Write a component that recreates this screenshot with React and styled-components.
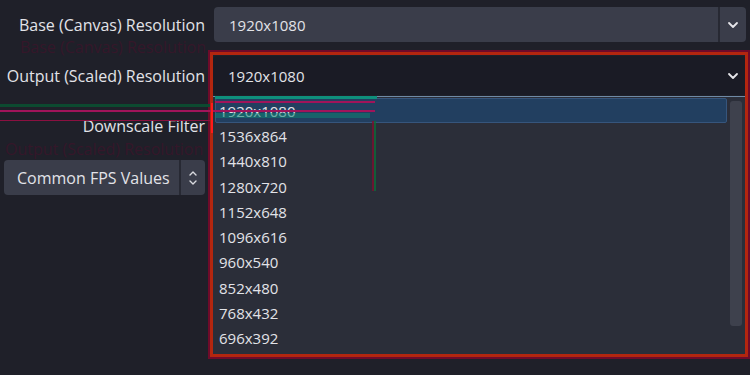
import React from "react";
import styled, { createGlobalStyle } from "styled-components";

const GlobalStyle = createGlobalStyle`
  html, body {
    margin: 0;
    padding: 0;
    background: #1f2029;
  }
  body {
    font-family: "Open Sans", "Noto Sans", sans-serif;
    font-size: 15px;
    color: #e2e3e8;
  }
`;

const Page = styled.div`
  position: relative;
  width: 750px;
  height: 375px;
  overflow: hidden;
  background: #1f2029;
`;

const Form = styled.div`
  display: flex;
  flex-direction: column;
  padding: 7px 4px 0 0;
`;

const Row = styled.div`
  display: flex;
  align-items: center;
  height: ${p => p.h || 35}px;
  margin-top: ${p => p.mt || 0}px;
`;

const Label = styled.div`
  width: 214px;
  flex: none;
  text-align: right;
  padding-right: 9px;
  box-sizing: border-box;
  white-space: nowrap;
  font-size: 16px;
`;

const Combo = styled.div`
  flex: 1;
  height: 100%;
  display: flex;
  align-items: stretch;
  border-radius: 4px;
  background: ${p => (p.open ? "#1a1b25" : "#3a3d4a")};
  margin-left: ${p => (p.open ? -1 : 0)}px;
`;

const ComboText = styled.div`
  flex: 1;
  display: flex;
  align-items: center;
  padding-left: 15px;
`;

const ComboArrow = styled.div`
  width: 26px;
  display: flex;
  align-items: center;
  justify-content: center;
  border-left: ${p => (p.open ? "none" : "2px solid #272933")};
`;

const FpsButton = styled.div`
  margin-left: 4px;
  width: 201px;
  height: 100%;
  display: flex;
  border-radius: 4px;
  background: #3a3d4a;
  font-size: 16px;
`;

const FpsText = styled.div`
  flex: 1;
  display: flex;
  align-items: center;
  padding-left: 13px;
`;

const FpsSpin = styled.div`
  width: 24px;
  display: flex;
  align-items: center;
  justify-content: center;
  border-left: 2px solid #272933;
`;

const List = styled.div`
  position: absolute;
  left: 213px;
  top: 96px;
  width: 532px;
  height: 259px;
  background: #2b2e39;
  border-top: 1px solid #6f8aa6;
  box-sizing: border-box;
  padding: 1px 18px 0 2px;
`;

const Item = styled.div`
  height: 25.3px;
  display: flex;
  align-items: center;
  padding-left: 3px;
  box-sizing: border-box;
  border-radius: 2px;
  background: ${p => (p.selected ? "#223f60" : "transparent")};
  border: 1px solid ${p => (p.selected ? "#36557c" : "transparent")};
`;

const Scrollbar = styled.div`
  position: absolute;
  right: 3px;
  top: 4px;
  width: 12px;
  height: 225px;
  border-radius: 3px;
  background: #3e414d;
`;

const Highlight = styled.div`
  position: absolute;
  left: 210px;
  top: 52px;
  width: 538px;
  height: 305px;
  box-sizing: border-box;
  border: 3px solid #b3260f;
  box-shadow: 0 0 0 2px #6e0b2a;
  pointer-events: none;
`;

// faint echo of the labels left behind by the capture
const Ghost = styled.div`
  position: absolute;
  pointer-events: none;
  left: ${p => p.x}px;
  top: ${p => p.y}px;
  font-size: 16px;
  color: #35172a;
  white-space: nowrap;
`;

const Glitch = styled.div`
  position: absolute;
  pointer-events: none;
  left: ${p => p.x}px;
  top: ${p => p.y}px;
  width: ${p => p.w}px;
  height: ${p => p.h}px;
  background: ${p => p.c};
  opacity: ${p => p.o || 1};
`;

const Chevron = () => (
  <svg width="12" height="8" viewBox="0 0 12 8">
    <path d="M2 2l4 4 4-4" fill="none" stroke="#e6e6ea" strokeWidth="1.8" strokeLinecap="round" strokeLinejoin="round" />
  </svg>
);

const UpDown = () => (
  <svg width="10" height="18" viewBox="0 0 10 18">
    <path d="M2 6l3-3 3 3M2 12l3 3 3-3" fill="none" stroke="#d8d9de" strokeWidth="1.4" strokeLinecap="round" strokeLinejoin="round" />
  </svg>
);

const resolutions = [
  "1920x1080",
  "1536x864",
  "1440x810",
  "1280x720",
  "1152x648",
  "1096x616",
  "960x540",
  "852x480",
  "768x432",
  "696x392",
];

export default function App() {
  return (
    <Page>
      <GlobalStyle />
      <Ghost x={20} y={36}>Base (Canvas) Resolution</Ghost>
      <Ghost x={5} y={138}>Output (Scaled) Resolution</Ghost>
      <Form>
        <Row>
          <Label>Base (Canvas) Resolution</Label>
          <Combo>
            <ComboText>1920x1080</ComboText>
            <ComboArrow>
              <Chevron />
            </ComboArrow>
          </Combo>
        </Row>
        <Row h={39} mt={14}>
          <Label>Output (Scaled) Resolution</Label>
          <Combo open>
            <ComboText>1920x1080</ComboText>
            <ComboArrow open>
              <Chevron />
            </ComboArrow>
          </Combo>
        </Row>
        <Row h={30} mt={16}>
          <Label>Downscale Filter</Label>
        </Row>
        <Row mt={19}>
          <FpsButton>
            <FpsText>Common FPS Values</FpsText>
            <FpsSpin>
              <UpDown />
            </FpsSpin>
          </FpsButton>
        </Row>
      </Form>

      <List>
        {resolutions.map((r, i) => (
          <Item key={r} selected={i === 0}>
            {r}
          </Item>
        ))}
        <Scrollbar />
      </List>

      <Highlight />

      <Glitch x={215} y={96} w={162} h={3} c="#0e8f7c" />
      <Glitch x={0} y={104} w={210} h={3} c="#0c4a30" />
      <Glitch x={215} y={101} w={160} h={2} c="#a0145a" />
      <Glitch x={0} y={110} w={375} h={2} c="#a0145a" />
      <Glitch x={215} y={113} w={155} h={5} c="#0e7f72" o={0.55} />
      <Glitch x={0} y={120} w={210} h={1} c="#8a1040" />
      <Glitch x={211} y={103} w={2} h={30} c="#ff1a1a" />
      <Glitch x={372} y={121} w={2} h={70} c="#7a1030" o={0.8} />
      <Glitch x={374} y={121} w={2} h={70} c="#0c6a3a" o={0.8} />
    </Page>
  );
}
